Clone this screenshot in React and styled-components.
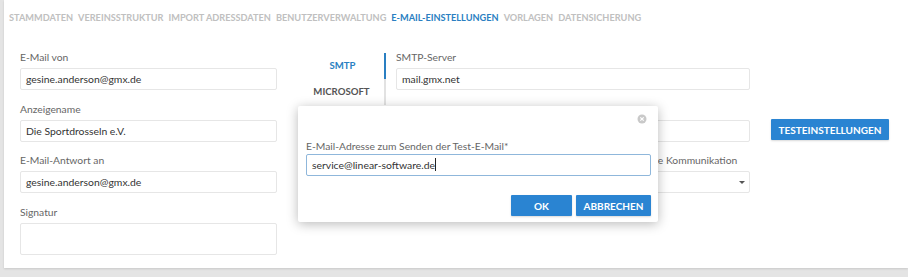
import React from "react";
import styled, { createGlobalStyle } from "styled-components";

const Global = createGlobalStyle`
  html, body { margin: 0; padding: 0; background: #e4e4e4; }
  * { box-sizing: border-box; }
  body { font-family: Lato, "Noto Sans", sans-serif; }
`;

const Page = styled.div`
  width: 908px;
  height: 277px;
  padding: 0 0 9px 4px;
  background: #e4e4e4;
  position: relative;
  overflow: hidden;
`;

const Card = styled.div`
  background: #fff;
  height: 100%;
  box-shadow: 0 1px 2px rgba(0, 0, 0, 0.12);
  padding: 11px 0 0 5px;
`;

const TabBar = styled.nav`
  display: flex;
  gap: 5px;
  height: 39px;
`;

const Tab = styled.span`
  font-size: 9.2px;
  font-weight: 700;
  line-height: 13px;
  color: ${(p) => (p.$active ? "#2a7fc2" : "#c0c0c0")};
`;

const Content = styled.div`
  display: flex;
  align-items: flex-start;
  padding-left: 11px;
`;

const Column = styled.div`
  display: flex;
  flex-direction: column;
  width: ${(p) => p.$w}px;
`;

const Label = styled.label`
  font-size: 10.3px;
  line-height: 14px;
  color: #666;
  margin-bottom: ${(p) => (p.$tight ? 1 : 4)}px;
  white-space: nowrap;
`;

const Input = styled.div`
  height: ${(p) => p.$h || 22}px;
  border: 1px solid #e6e6e6;
  border-radius: 2px;
  font-size: 10.4px;
  line-height: 20px;
  color: #333;
  padding: 0 5px;
  margin-bottom: 11.6px;
  position: relative;
`;

const Caret = styled.span`
  position: absolute;
  right: 4px;
  top: 9px;
  width: 0;
  height: 0;
  border-left: 3px solid transparent;
  border-right: 3px solid transparent;
  border-top: 3px solid #555;
`;

const SideTabs = styled.div`
  display: flex;
  flex-direction: column;
  width: 85px;
  margin-left: 24px;
  margin-top: 3px;
  border-right: 2px solid #e2e2e2;
`;

const SideTab = styled.div`
  height: 26px;
  font-size: 9.6px;
  font-weight: 700;
  line-height: 26px;
  text-align: center;
  color: ${(p) => (p.$active ? "#2a7fc2" : "#555")};
  margin-right: ${(p) => (p.$active ? "-2px" : "0")};
  border-right: ${(p) => (p.$active ? "2px solid #2a7fc2" : "none")};
  padding-right: ${(p) => (p.$active ? "0" : "2px")};
`;

const RightColumn = styled(Column)`
  margin-left: 10px;
`;

const Button = styled.button`
  height: 21px;
  width: ${(p) => p.$w}px;
  border: none;
  border-radius: 1px;
  background: #2a84d2;
  color: #fff;
  font-family: Lato, "Noto Sans", sans-serif;
  font-size: 10px;
  font-weight: 700;
  padding: 0;
  box-shadow: 0 1px 2px rgba(0, 0, 0, 0.15);
`;

const SideButton = styled(Button)`
  margin-left: 21px;
  margin-top: 69px;
`;

const Dialog = styled.div`
  position: absolute;
  left: 298px;
  top: 106px;
  width: 360px;
  height: 116px;
  background: #fff;
  border-radius: 2px;
  box-shadow: 0 2px 12px rgba(0, 0, 0, 0.28);
  padding: 8px 7px 0 8px;
  display: flex;
  flex-direction: column;
`;

const CloseRow = styled.div`
  display: flex;
  justify-content: flex-end;
  height: 25px;
  padding-right: 4px;
`;

const DialogInput = styled(Input)`
  border-color: #8fb7db;
  color: #333;
  margin-bottom: 19px;
`;

const Cursor = styled.span`
  display: inline-block;
  width: 1px;
  height: 13px;
  background: #222;
  vertical-align: -2px;
`;

const Actions = styled.div`
  display: flex;
  justify-content: flex-end;
  gap: 4px;
`;

const CloseIcon = () => (
  <svg width="10" height="10" viewBox="0 0 10 10">
    <circle cx="5" cy="5" r="4.5" fill="#c9c9c9" />
    <path d="M3.3 3.3 L6.7 6.7 M6.7 3.3 L3.3 6.7" stroke="#fff" strokeWidth="1.2" />
  </svg>
);

export default function App() {
  const tabs = [
    "STAMMDATEN",
    "VEREINSSTRUKTUR",
    "IMPORT ADRESSDATEN",
    "BENUTZERVERWALTUNG",
    "E-MAIL-EINSTELLUNGEN",
    "VORLAGEN",
    "DATENSICHERUNG",
  ];
  return (
    <Page>
      <Global />
      <Card>
        <TabBar>
          {tabs.map((t) => (
            <Tab key={t} $active={t === "E-MAIL-EINSTELLUNGEN"}>
              {t}
            </Tab>
          ))}
        </TabBar>
        <Content>
          <Column $w={257}>
            <Label>E-Mail von</Label>
            <Input>gesine.anderson@gmx.de</Input>
            <Label>Anzeigename</Label>
            <Input>Die Sportdrosseln e.V.</Input>
            <Label>E-Mail-Antwort an</Label>
            <Input>gesine.anderson@gmx.de</Input>
            <Label>Signatur</Label>
            <Input $h={32} />
          </Column>
          <SideTabs>
            <SideTab $active>SMTP</SideTab>
            <SideTab>MICROSOFT</SideTab>
          </SideTabs>
          <RightColumn $w={354}>
            <Label>SMTP-Server</Label>
            <Input>mail.gmx.net</Input>
            <Label>&nbsp;</Label>
            <Input />
            <Label>Postfach für Antworten auf alle Rundschreiben und externe Kommunikation</Label>
            <Input>
              <Caret />
            </Input>
          </RightColumn>
          <SideButton $w={118}>TESTEINSTELLUNGEN</SideButton>
        </Content>
      </Card>
      <Dialog role="dialog">
        <CloseRow>
          <CloseIcon />
        </CloseRow>
        <Label $tight>E-Mail-Adresse zum Senden der Test-E-Mail*</Label>
        <DialogInput>
          service@linear-software.de
          <Cursor />
        </DialogInput>
        <Actions>
          <Button $w={61}>OK</Button>
          <Button $w={75}>ABBRECHEN</Button>
        </Actions>
      </Dialog>
    </Page>
  );
}
